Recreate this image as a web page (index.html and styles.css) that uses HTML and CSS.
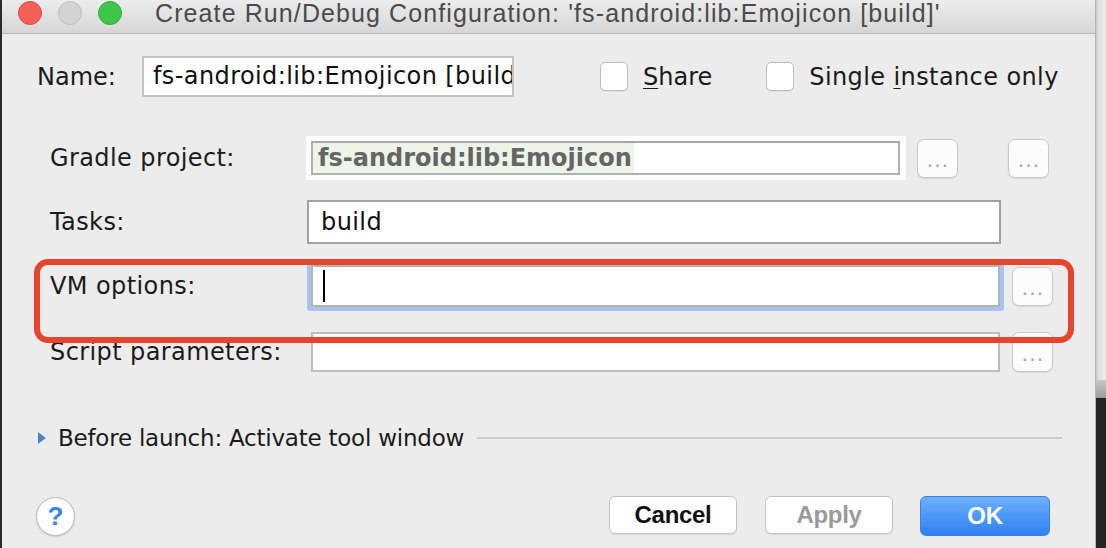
FILE: index.html
```html
<!DOCTYPE html>
<html>
<head>
<meta charset="utf-8">
<link rel="stylesheet" href="styles.css">
</head>
<body>
<div class="screen">
  <div class="edge-left"></div>
  <div class="window">
    <div class="titlebar">
      <div class="lights">
        <span class="light red"></span>
        <span class="light gray"></span>
        <span class="light green"></span>
      </div>
      <div class="title">Create Run/Debug Configuration: 'fs-android:lib:Emojicon [build]'</div>
    </div>
    <div class="content">
      <div class="name-row">
        <label class="name-label">Name:</label>
        <div class="name-input">fs-android:lib:Emojicon [build]</div>
        <div class="check share"><span class="box"></span><span class="check-text"><u>S</u>hare</span></div>
        <div class="check single"><span class="box"></span><span class="check-text">Single <u>i</u>nstance only</span></div>
      </div>

      <div class="form">
        <div class="row gradle-row">
          <div class="label">Gradle project:</div>
          <div class="gradle-field">
            <div class="gradle-inner"><span class="gradle-value">fs-android:lib:Emojicon</span></div>
          </div>
          <div class="browse b1"><span>...</span></div>
          <div class="browse b2"><span>...</span></div>
        </div>
        <div class="row tasks-row">
          <div class="label">Tasks:</div>
          <div class="field tasks-field">build</div>
        </div>
        <div class="row vm-row">
          <div class="label">VM options:</div>
          <div class="field vm-field"><span class="caret"></span></div>
          <div class="browse b3"><span>...</span></div>
        </div>
        <div class="row script-row">
          <div class="label">Script parameters:</div>
          <div class="field script-field"></div>
          <div class="browse b3"><span>...</span></div>
        </div>
        <div class="annotation"></div>
      </div>

      <div class="before">
        <span class="tri"></span>
        <span class="before-text">Before launch: Activate tool window</span>
        <span class="sep"></span>
      </div>

      <div class="footer">
        <div class="help">?</div>
        <div class="buttons">
          <div class="btn cancel">Cancel</div>
          <div class="btn apply">Apply</div>
          <div class="btn ok">OK</div>
        </div>
      </div>
    </div>
  </div>
  <div class="edge-right">
    <div class="er-top"></div>
    <div class="er-mid"></div>
    <div class="er-bottom"></div>
  </div>
</div>
</body>
</html>
```

FILE: styles.css
```css
html, body {
  margin: 0;
  padding: 0;
  width: 1106px;
  height: 548px;
  overflow: hidden;
  background: #222;
}

.screen {
  display: flex;
  width: 1106px;
  height: 548px;
}

.edge-left {
  width: 2px;
  background: #2a2a2a;
  flex: none;
}

.window {
  width: 1093px;
  flex: none;
  background: #ececec;
  border-right: 1px solid #b4b4b4;
  display: flex;
  flex-direction: column;
}

.edge-right {
  flex: 1;
  display: flex;
  flex-direction: column;
}
.er-top {
  height: 380px;
  background: linear-gradient(to right, #c8c8c8 0, #e2e2e2 3px, #ebebeb 100%);
}
.er-mid {
  height: 18px;
  background: linear-gradient(to bottom, #c9c9c9, #9a9a9a);
}
.er-bottom {
  flex: 1;
  background: #232323;
}

/* Title bar */
.titlebar {
  height: 33px;
  flex: none;
  background: linear-gradient(to bottom, #ececec, #d6d6d6);
  border-bottom: 1px solid #b8b8b8;
  display: flex;
  align-items: flex-start;
}
.lights {
  display: flex;
  gap: 16px;
  padding-left: 16px;
  padding-top: 1px;
}
.light {
  width: 22px;
  height: 22px;
  border-radius: 50%;
  border: 1px solid transparent;
}
.light.red { background: #f3605a; border-color: #dc4c46; }
.light.gray { background: #d3d3d3; border-color: #bdbdbd; }
.light.green { background: #3ec64b; border-color: #2fae3c; }
.title {
  margin-left: 33px;
  font-family: "Liberation Sans", Arial, sans-serif;
  font-size: 25px;
  letter-spacing: 1.1px;
  line-height: 27px;
  color: #4b4b4b;
  white-space: nowrap;
}

/* Content */
.content {
  position: relative;
  flex: 1;
  font-family: "DejaVu Sans", "Liberation Sans", sans-serif;
  font-size: 24px;
  letter-spacing: 0.4px;
  color: #1b1b1b;
}

.name-row {
  display: flex;
  align-items: center;
  margin-top: 22px;
  height: 41px;
  padding-left: 35px;
}
.name-label {
  width: 105px;
  flex: none;
  letter-spacing: 0;
}
.name-input {
  height: 37px;
  flex: none;
  border: 2px solid #c4c4c4;
  background: #fff;
  box-sizing: content-box;
  overflow: hidden;
  white-space: nowrap;
  padding-left: 9px;
  line-height: 37px;
  color: #111;
  width: 359px;
}
.check {
  display: flex;
  align-items: center;
}
.check.share { margin-left: 86px; }
.check.single { margin-left: 54px; }
.box {
  width: 26px;
  height: 27px;
  background: #fff;
  border: 1px solid #bdbdbd;
  border-radius: 5px;
  box-shadow: 0 1px 1px rgba(0,0,0,0.06);
}
.check-text {
  margin-left: 15px;
  color: #1b1b1b;
}
.share .check-text { letter-spacing: 0; }
.check-text u {
  text-decoration-thickness: 1px;
  text-underline-offset: 3px;
}

/* Form */
.form {
  position: relative;
  margin-top: 39px;
}
.row {
  display: flex;
  align-items: center;
  padding-left: 48px;
}
.label {
  width: 256px;
  flex: none;
  white-space: nowrap;
}
.gradle-row { height: 44px; }
.gradle-field {
  width: 600px;
  height: 44px;
  background: #fff;
  box-sizing: border-box;
  padding: 5px 6px 5px 5px;
}
.gradle-inner {
  height: 34px;
  box-sizing: border-box;
  border: 2px solid #b0b0b0;
  border-top-color: #a8a8a8;
  display: flex;
  align-items: stretch;
}
.gradle-value {
  background: #edf5e8;
  font-weight: bold;
  color: #656565;
  padding: 0 2px 0 5px;
  line-height: 30px;
  letter-spacing: 0;
}
.browse {
  width: 39px;
  height: 37px;
  flex: none;
  background: #fcfcfc;
  border: 1px solid #c9c9c9;
  border-radius: 7px;
  box-shadow: 0 1px 1px rgba(0,0,0,0.08);
  display: flex;
  justify-content: center;
  align-items: flex-end;
  color: #a8a8a8;
  font-family: "Liberation Sans", sans-serif;
  font-size: 16px;
  letter-spacing: 3px;
  line-height: 1;
}
.browse span {
  padding-bottom: 7px;
  padding-left: 3px;
  font-weight: bold;
}
.b1 { margin-left: 11px; }
.b2 { margin-left: 50px; }
.b3 { margin-left: 11px; }

.field {
  background: #fff;
  box-sizing: border-box;
  border: 2px solid #a2a2a2;
}
.tasks-row { height: 44px; margin-top: 20px; }
.tasks-field {
  width: 694px;
  height: 44px;
  margin-left: 1px;
  padding-left: 12px;
  line-height: 40px;
  color: #111;
}
.vm-row { height: 42px; margin-top: 21px; }
.vm-field {
  width: 689px;
  height: 42px;
  margin-left: 5px;
  border-color: #b3b3b3;
  box-shadow: 0 0 0 4px #a7c5ec;
  border-radius: 1px;
  display: flex;
  align-items: center;
  padding-left: 10px;
}
.caret {
  width: 2px;
  height: 32px;
  background: #000;
}
.vm-row .browse { margin-left: 12px; }
.script-row { height: 40px; margin-top: 25px; }
.script-field {
  width: 689px;
  height: 40px;
  margin-left: 5px;
  border-color: #bcbcbc;
}
.script-row .browse { margin-left: 12px; height: 38px; }

.annotation {
  position: absolute;
  left: 32px;
  top: 123px;
  width: 1040px;
  height: 84px;
  box-sizing: border-box;
  border: 6px solid #e8442c;
  border-radius: 14px;
}

/* Before launch */
.before {
  display: flex;
  align-items: center;
  height: 24px;
  margin-top: 54px;
  padding-left: 36px;
  padding-right: 33px;
}
.tri {
  width: 0;
  height: 0;
  border-top: 6px solid transparent;
  border-bottom: 6px solid transparent;
  border-left: 8px solid #4b88bd;
}
.before-text {
  margin-left: 12px;
  color: #1b1b1b;
  font-size: 23px;
  letter-spacing: -0.23px;
  white-space: nowrap;
}
.sep {
  flex: 1;
  height: 2px;
  background: #cbcbcb;
  margin-left: 13px;
}

/* Footer */
.footer {
  display: flex;
  align-items: center;
  margin-top: 46px;
  padding-left: 34px;
  padding-right: 45px;
}
.help {
  width: 37px;
  height: 37px;
  border-radius: 50%;
  background: #fff;
  border: 1px solid #b9b9b9;
  box-shadow: 0 1px 2px rgba(0,0,0,0.15);
  display: flex;
  align-items: center;
  justify-content: center;
  color: #3a84e8;
  font-family: "Liberation Sans", sans-serif;
  font-size: 26px;
  font-weight: bold;
  letter-spacing: 0;
}
.buttons {
  margin-left: auto;
  display: flex;
  gap: 28px;
}
.btn {
  height: 38px;
  box-sizing: border-box;
  border-radius: 6px;
  display: flex;
  align-items: center;
  justify-content: center;
  font-family: "Liberation Sans", Arial, sans-serif;
  font-weight: bold;
  font-size: 24px;
  letter-spacing: -0.3px;
}
.cancel, .apply {
  width: 128px;
  background: #fff;
  border: 1px solid #c3c3c3;
  box-shadow: 0 1px 1px rgba(0,0,0,0.08);
}
.cancel { color: #111; }
.apply { color: #9a9a9a; }
.ok {
  width: 130px;
  height: 40px;
  margin-left: -1px;
  background: linear-gradient(to bottom, #6db0fb, #2f80f2);
  border: 1px solid #3b82e6;
  color: #fff;
}
```
